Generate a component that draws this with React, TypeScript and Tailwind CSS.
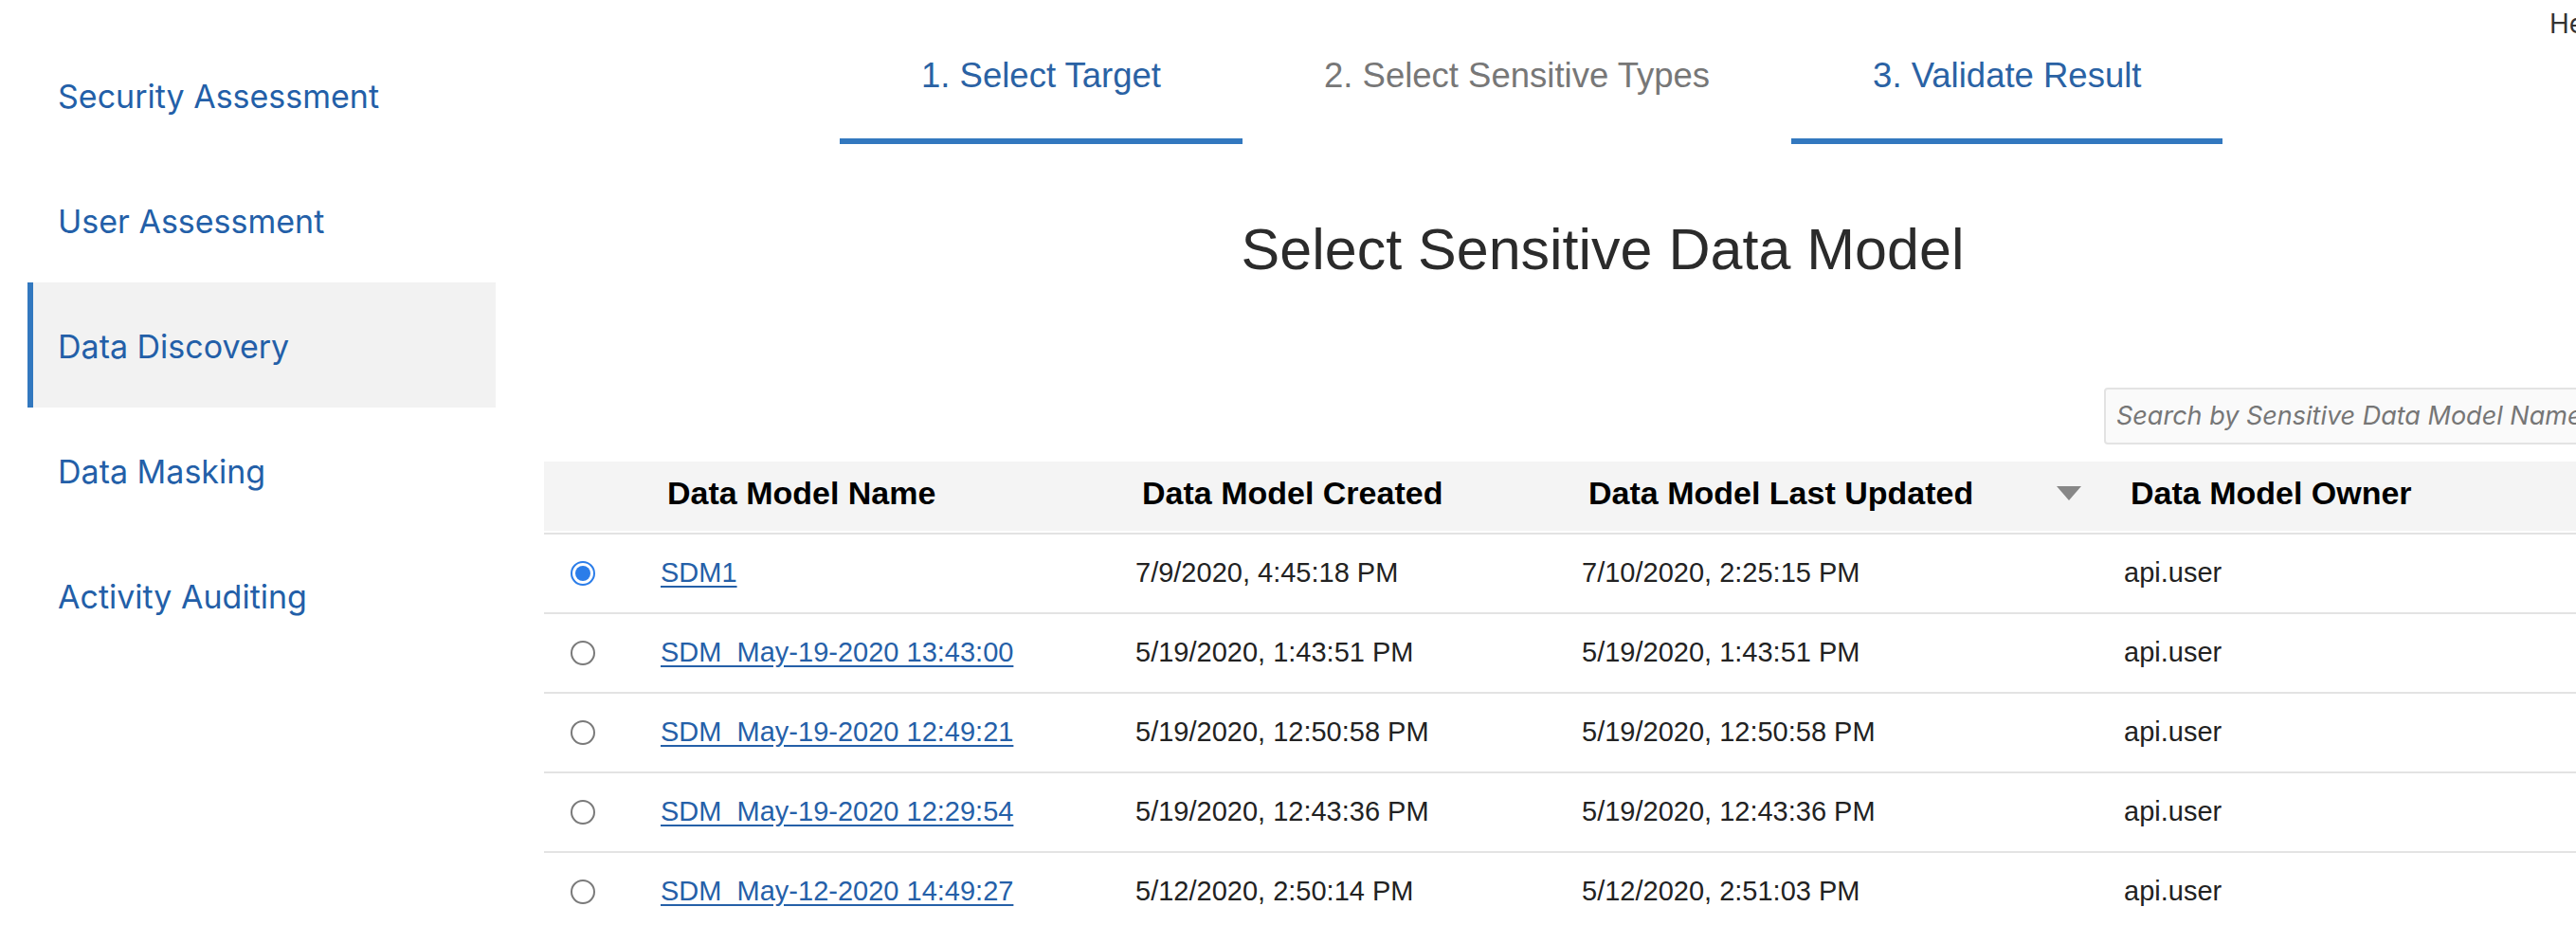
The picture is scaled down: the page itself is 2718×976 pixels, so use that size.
import React from "react";

const navItems = [
  "Security Assessment",
  "User Assessment",
  "Data Discovery",
  "Data Masking",
  "Activity Auditing",
];

const tabs = [
  { label: "1. Select Target", done: true },
  { label: "2. Select Sensitive Types", done: false },
  { label: "3. Validate Result", done: true },
];

const rows = [
  { name: "SDM1", created: "7/9/2020, 4:45:18 PM", updated: "7/10/2020, 2:25:15 PM", owner: "api.user", selected: true },
  { name: "SDM_May-19-2020 13:43:00", created: "5/19/2020, 1:43:51 PM", updated: "5/19/2020, 1:43:51 PM", owner: "api.user" },
  { name: "SDM_May-19-2020 12:49:21", created: "5/19/2020, 12:50:58 PM", updated: "5/19/2020, 12:50:58 PM", owner: "api.user" },
  { name: "SDM_May-19-2020 12:29:54", created: "5/19/2020, 12:43:36 PM", updated: "5/19/2020, 12:43:36 PM", owner: "api.user" },
  { name: "SDM_May-12-2020 14:49:27", created: "5/12/2020, 2:50:14 PM", updated: "5/12/2020, 2:51:03 PM", owner: "api.user" },
];

function Radio({ checked }: { checked?: boolean }) {
  if (checked) {
    return (
      <span className="flex h-[26px] w-[26px] items-center justify-center rounded-full border-2 border-[#2b7de9] bg-white">
        <span className="h-[16px] w-[16px] rounded-full bg-[#2b7de9]" />
      </span>
    );
  }
  return <span className="block h-[26px] w-[26px] rounded-full border-2 border-[#7a7a7a] bg-white" />;
}

function Sidebar() {
  return (
    <aside className="w-[523px] shrink-0 pl-[29px] pt-[34px] font-['Inter',sans-serif]">
      <ul>
        {navItems.map((item) => {
          const active = item === "Data Discovery";
          return (
            <li
              key={item}
              className={
                "flex h-[132px] items-center border-l-[6px] pl-[26px] pt-[3px] text-[34px] text-[#235fa8] " +
                (active ? "border-[#3278bf] bg-[#f2f2f2]" : "border-transparent")
              }
            >
              {item}
            </li>
          );
        })}
      </ul>
    </aside>
  );
}

export default function App() {
  return (
    <div className="flex h-[976px] w-full overflow-hidden bg-white font-['Liberation_Sans',Arial,sans-serif]">
      <Sidebar />
      <main className="w-[2300px] shrink-0">
        <div className="flex items-start">
          <nav className="ml-[363px] flex">
            {tabs.map((t) => (
              <div
                key={t.label}
                className={
                  "border-b-[6px] px-[86px] pb-[44px] pt-[58px] text-[36.5px] leading-[44px] " +
                  (t.done ? "border-[#3278bf] text-[#2a62a4]" : "border-transparent text-[#777]")
                }
              >
                {t.label}
              </div>
            ))}
          </nav>
          <div className="ml-auto mr-[72px] pt-[4px] font-['Inter',sans-serif] text-[28px] text-[#333]">Help</div>
        </div>

        <h1 className="mt-[75px] pl-[36px] text-center text-[61px] font-normal leading-[73px] text-[#2b2b2b]">
          Select Sensitive Data Model
        </h1>

        <div className="px-[51px]">
          <div className="mt-[109px] flex justify-end">
            <div className="flex h-[60px] w-[552px] items-center rounded-[4px] border-2 border-[#e3e3e3] bg-[#fafafa] pl-[11px] font-['Inter',sans-serif] text-[27px] italic text-[#767676]">
              Search by Sensitive Data Model Name
            </div>
          </div>

          <div className="mt-[18px]">
            <div className="grid h-[73px] grid-cols-[123px_501px_471px_572px_1fr] items-center bg-[#f4f4f4] pb-[6px] text-[34px] font-bold text-black">
              <div />
              <div className="pl-[7px]">Data Model Name</div>
              <div className="pl-[7px]">Data Model Created</div>
              <div className="flex items-center justify-between pl-[7px] pr-[45px]">
                <span>Data Model Last Updated</span>
                <svg width="26" height="15" viewBox="0 0 26 15">
                  <path d="M0 0 H26 L13 15 Z" fill="#878787" />
                </svg>
              </div>
              <div className="pl-[7px]">Data Model Owner</div>
            </div>
            <div className="h-[2px]" />
            {rows.map((r) => (
              <div
                key={r.name}
                className="grid h-[84px] grid-cols-[123px_501px_471px_572px_1fr] items-center border-t-2 border-[#e3e3e3] text-[29px] text-[#222]"
              >
                <div className="pl-[28px]">
                  <Radio checked={r.selected} />
                </div>
                <div>
                  <a className="text-[#2560a8] underline underline-offset-[4px]" href="#">
                    {r.name}
                  </a>
                </div>
                <div>{r.created}</div>
                <div>{r.updated}</div>
                <div>{r.owner}</div>
              </div>
            ))}
          </div>
        </div>
      </main>
    </div>
  );
}
